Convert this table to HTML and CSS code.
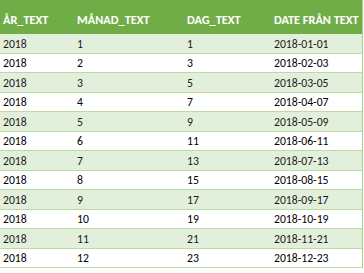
FILE: index.html
```html
<!DOCTYPE html>
<html>
<head>
<meta charset="utf-8">
<link rel="stylesheet" href="styles.css">
</head>
<body>
<div class="sheet">
  <div class="row head">
    <div class="cell">ÅR_TEXT</div>
    <div class="cell">MÅNAD_TEXT</div>
    <div class="cell">DAG_TEXT</div>
    <div class="cell">DATE FRÅN TEXT</div>
  </div>
  <div class="row band"><div class="cell">2018</div><div class="cell">1</div><div class="cell">1</div><div class="cell">2018-01-01</div></div>
  <div class="row plain"><div class="cell">2018</div><div class="cell">2</div><div class="cell">3</div><div class="cell">2018-02-03</div></div>
  <div class="row band"><div class="cell">2018</div><div class="cell">3</div><div class="cell">5</div><div class="cell">2018-03-05</div></div>
  <div class="row plain"><div class="cell">2018</div><div class="cell">4</div><div class="cell">7</div><div class="cell">2018-04-07</div></div>
  <div class="row band"><div class="cell">2018</div><div class="cell">5</div><div class="cell">9</div><div class="cell">2018-05-09</div></div>
  <div class="row plain"><div class="cell">2018</div><div class="cell">6</div><div class="cell">11</div><div class="cell">2018-06-11</div></div>
  <div class="row band"><div class="cell">2018</div><div class="cell">7</div><div class="cell">13</div><div class="cell">2018-07-13</div></div>
  <div class="row plain"><div class="cell">2018</div><div class="cell">8</div><div class="cell">15</div><div class="cell">2018-08-15</div></div>
  <div class="row band"><div class="cell">2018</div><div class="cell">9</div><div class="cell">17</div><div class="cell">2018-09-17</div></div>
  <div class="row plain"><div class="cell">2018</div><div class="cell">10</div><div class="cell">19</div><div class="cell">2018-10-19</div></div>
  <div class="row band"><div class="cell">2018</div><div class="cell">11</div><div class="cell">21</div><div class="cell">2018-11-21</div></div>
  <div class="row plain"><div class="cell">2018</div><div class="cell">12</div><div class="cell">23</div><div class="cell">2018-12-23</div></div>
</div>
</body>
</html>
```

FILE: styles.css
```css
html, body {
  margin: 0;
  padding: 0;
  background: #ffffff;
}

.sheet {
  width: 363px;
  font-family: Carlito, Calibri, "Liberation Sans", Arial, sans-serif;
  font-size: 11.7px;
  border-right: 1px solid #a9d08e;
  box-sizing: border-box;
}

.row {
  display: grid;
  grid-template-columns: 74px 110px 87px 1fr;
  box-sizing: border-box;
  height: 19.5px;
  border-bottom: 1px solid #bcdba4;
  align-items: end;
}

.cell {
  padding: 0 0 2px 3px;
  white-space: nowrap;
  line-height: 13px;
}

.head {
  height: 34px;
  background: #70ad47;
  color: #ffffff;
  font-weight: bold;
  font-size: 12.3px;
  border-bottom: none;
  align-items: center;
}

.head .cell {
  padding: 4px 0 0 3px;
}

.band {
  background: #e2efda;
  color: #1a1a1a;
}

.plain {
  background: #ffffff;
  color: #000000;
}
```
